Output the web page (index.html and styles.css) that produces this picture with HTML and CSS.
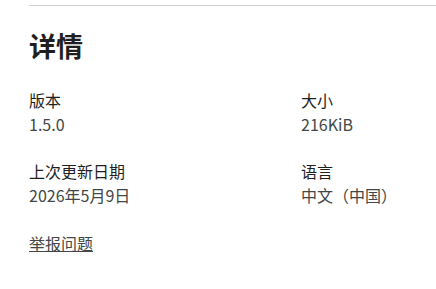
FILE: index.html
```html
<!DOCTYPE html>
<html lang="zh-CN">
<head>
    <meta charset="UTF-8">
    <meta name="viewport" content="width=device-width, initial-scale=1.0">
    <title>详情</title>
    <link rel="stylesheet" href="styles.css">
</head>
<body>
    <section class="details">
        <hr class="divider">
        <h2>详情</h2>
        <div class="details-grid">
            <div class="item">
                <div class="label">版本</div>
                <div class="value">1.5.0</div>
            </div>
            <div class="item">
                <div class="label">大小</div>
                <div class="value">216KiB</div>
            </div>
            <div class="item">
                <div class="label">上次更新日期</div>
                <div class="value">2026年5月9日</div>
            </div>
            <div class="item">
                <div class="label">语言</div>
                <div class="value">中文（中国）</div>
            </div>
        </div>
        <a class="report-link" href="#">举报问题</a>
    </section>
</body>
</html>
```

FILE: styles.css
```css
body {
    margin: 0;
    background-color: #fff;
    font-family: 'Noto Sans CJK SC', Roboto, sans-serif;
    color: #1f1f1f;
}
.details {
    padding: 5px 0 0 29px;
}
.divider {
    margin: 0;
    border: none;
    border-top: 1px solid #cfcfcf;
}
.details h2 {
    margin: 22px 0 0;
    font-size: 27px;
    line-height: 36px;
    font-weight: bold;
    color: #1f1f1f;
}
.details-grid {
    display: grid;
    grid-template-columns: 272px 1fr;
    row-gap: 23px;
    margin-top: 24px;
}
.label {
    font-size: 16px;
    line-height: 24px;
    font-weight: 400;
    color: #1f1f1f;
}
.value {
    font-size: 16px;
    line-height: 24px;
    color: #444746;
}
.report-link {
    display: inline-block;
    margin-top: 24px;
    font-size: 16px;
    line-height: 24px;
    color: #444746;
    text-decoration: underline;
}
```
